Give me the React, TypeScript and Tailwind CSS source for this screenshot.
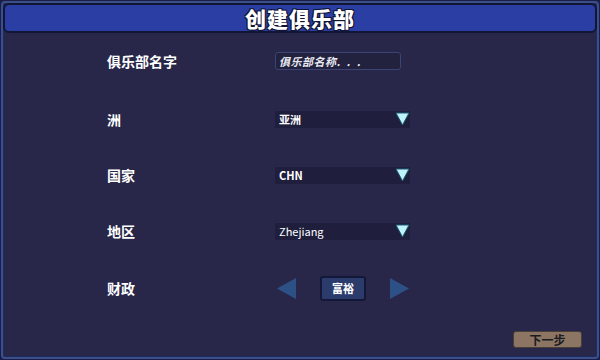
import React from "react";

const font = { fontFamily: '"Noto Sans CJK SC", "Noto Sans", sans-serif' };

function Tri({ dir, className }: { dir: "down" | "left" | "right"; className?: string }) {
  if (dir === "down")
    return (
      <svg width="15" height="14" viewBox="0 0 15 14" className={className}>
        <path d="M1 1 H14 L7.5 13 Z" fill="#bff3fb" stroke="#1e5a73" strokeWidth="1" strokeLinejoin="round" />
      </svg>
    );
  if (dir === "left")
    return (
      <svg width="21" height="23" viewBox="0 0 21 23" className={className}>
        <path d="M20 1 V22 L1 11.5 Z" fill="#2d5186" />
      </svg>
    );
  return (
    <svg width="21" height="23" viewBox="0 0 21 23" className={className}>
      <path d="M1 1 V22 L20 11.5 Z" fill="#2d5186" />
    </svg>
  );
}

function Select({ value, latin }: { value: string; latin?: boolean }) {
  return (
    <div className="flex h-[17px] w-[135px] items-center justify-between bg-[#1f1f3d] pl-[4px] pr-[0px]">
      <span
        className={`text-[11px] leading-none text-white ${latin ? "font-normal" : "font-bold"}`}
        style={font}
      >
        {value}
      </span>
      <Tri dir="down" />
    </div>
  );
}

export default function App() {
  const label = "text-[14px] font-bold leading-none text-white";
  return (
    <div className="h-[360px] w-[600px] overflow-hidden bg-[#1a1d4a] p-[1px]" style={font}>
      <div className="flex h-full w-full flex-col rounded-[4px] border-2 border-[#3b5089] bg-[#282749] shadow-[inset_0_0_0_1px_#1e2a5e]">
        <div className="flex h-[30px] items-center justify-center rounded-[6px] border-2 border-[#111637] bg-[#2a3ea3]">
          <span
            className="text-[21px] font-black leading-none tracking-[1px] text-white"
            style={{ ...font, textShadow: "1px 1px 0 #101430, -1px -1px 0 #101430, 1px -1px 0 #101430, -1px 1px 0 #101430" }}
          >
            创建俱乐部
          </span>
        </div>
        <div className="flex flex-1 flex-col pl-[104px] pt-[18px]">
          <div className="flex h-[20px] items-center">
            <div className={`w-[168px] ${label}`}>俱乐部名字</div>
            <div className="flex h-[18px] w-[126px] items-center rounded-[3px] border border-[#3c4474] bg-[#22223f] pl-[3px]">
              <span className="text-[11px] font-bold italic leading-none tracking-[0.5px] text-[#e8e8f0]">
                俱乐部名称.&nbsp;&nbsp;.&nbsp;&nbsp;.
              </span>
            </div>
          </div>
          <div className="mt-[38px] flex h-[20px] items-center">
            <div className={`w-[168px] ${label}`}>洲</div>
            <Select value="亚洲" />
          </div>
          <div className="mt-[36px] flex h-[20px] items-center">
            <div className={`w-[168px] ${label}`}>国家</div>
            <Select value="CHN" />
          </div>
          <div className="mt-[36px] flex h-[20px] items-center">
            <div className={`w-[168px] ${label}`}>地区</div>
            <Select value="Zhejiang" latin />
          </div>
          <div className="mt-[37px] flex h-[20px] items-center">
            <div className={`w-[168px] ${label}`}>财政</div>
            <div className="flex items-center">
              <Tri dir="left" className="ml-[1px]" />
              <div className="ml-[23px] flex h-[25px] w-[46px] items-center justify-center rounded-[3px] border-2 border-[#141838] bg-[#2b3b6c]">
                <span className="text-[11px] font-bold leading-none text-white">富裕</span>
              </div>
              <Tri dir="right" className="ml-[23px]" />
            </div>
          </div>
          <div className="mt-auto mb-[9px] flex justify-end pr-[15px]">
            <div className="flex h-[17px] w-[69px] items-center justify-center rounded-[3px] border border-[#4a3f36] bg-[#8c7562]">
              <span className="text-[12px] font-bold leading-none text-[#1b1b22]">下一步</span>
            </div>
          </div>
        </div>
      </div>
    </div>
  );
}
